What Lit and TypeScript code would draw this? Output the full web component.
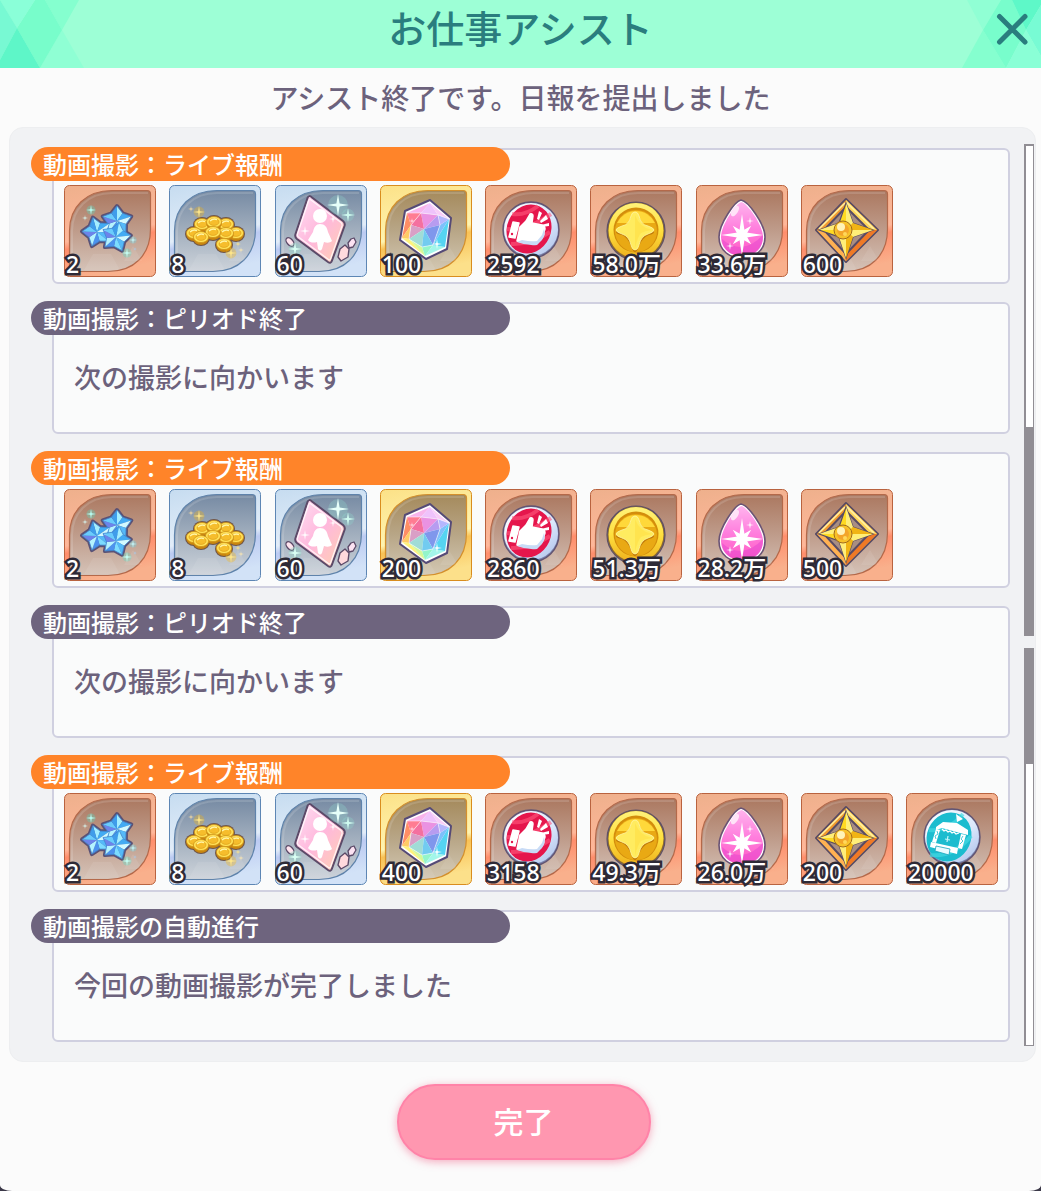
import { LitElement, html, css, svg, type TemplateResult, type SVGTemplateResult } from "lit";
import { customElement, property } from "lit/decorators.js";

type Tone = "bronze" | "silver" | "gold";
type Kind =
  | "stars" | "coins" | "card" | "prism" | "like"
  | "gold" | "drop" | "diamond" | "stage";

interface Reward { kind: Kind; count: string; }
interface Entry { title: string; rewards?: Reward[]; message?: string; }

const KINDS: Kind[] = ["stars", "coins", "card", "prism", "like", "gold", "drop", "diamond", "stage"];
const rewards = (...counts: string[]): Reward[] =>
  counts.map((count, i) => ({ kind: KINDS[i], count }));

const ENTRIES: Entry[] = [
  { title: "動画撮影：ライブ報酬", rewards: rewards("2", "8", "60", "100", "2592", "58.0万", "33.6万", "600") },
  { title: "動画撮影：ピリオド終了", message: "次の撮影に向かいます" },
  { title: "動画撮影：ライブ報酬", rewards: rewards("2", "8", "60", "200", "2860", "51.3万", "28.2万", "500") },
  { title: "動画撮影：ピリオド終了", message: "次の撮影に向かいます" },
  { title: "動画撮影：ライブ報酬", rewards: rewards("2", "8", "60", "400", "3158", "49.3万", "26.0万", "200", "20000") },
  { title: "動画撮影の自動進行", message: "今回の動画撮影が完了しました" },
];

const TONES: Record<Kind, Tone> = {
  stars: "bronze", coins: "silver", card: "silver", prism: "gold", like: "bronze",
  gold: "bronze", drop: "bronze", diamond: "bronze", stage: "bronze",
};

const PALETTE: Record<Tone, { edge: string; line: string; outer: string[]; inner: string[] }> = {
  bronze: { edge: "#b9633f", line: "#b4694a", outer: ["#eeb08c", "#ffb799", "#ff8e6c", "#f9b08c"], inner: ["#ab7860", "#bf9c8b", "#d5c3b8"] },
  silver: { edge: "#5d86b4", line: "#5f83ab", outer: ["#c6dcf0", "#e2edf9", "#bccbf2", "#d2e2f7"], inner: ["#768aa3", "#a2afbe", "#cdd3da"] },
  gold: { edge: "#d98d1e", line: "#d4902c", outer: ["#fce187", "#fff4b0", "#f9c256", "#fce08a"], inner: ["#a58a5c", "#b8a687", "#d3c8b3"] },
};

const ngon = (cx: number, cy: number, n: number, R: number, r: number, turn: number) =>
  Array.from({ length: n * 2 }, (_, i) => {
    const a = ((turn + (i * 180) / n) * Math.PI) / 180;
    const d = i % 2 ? r : R;
    return [cx + d * Math.sin(a), cy - d * Math.cos(a)] as const;
  });

const pts = (p: ReadonlyArray<readonly [number, number]>) =>
  p.map(([x, y]) => `${x.toFixed(1)},${y.toFixed(1)}`).join(" ");

const sparkle = (x: number, y: number, r: number, fill = "#fff", glow = "") => svg`
  ${glow ? svg`<circle cx=${x} cy=${y} r=${r * 0.9} fill=${glow} opacity="0.3"></circle>` : ""}
  <polygon points=${pts(ngon(x, y, 4, r, r * 0.2, 0))} fill=${fill}></polygon>`;

const blueStar = (x: number, y: number, turn: number) => {
  const p = ngon(x, y, 5, 15, 9.5, turn);
  const shades = ["#a4eeff", "#43abf3", "#d2f9ff", "#55b9f8", "#7cdcff", "#4c92ee", "#b4f3ff", "#6d83ea", "#6accfc", "#3f9dea"];
  return svg`${p.map((a, i) => svg`<polygon points=${pts([[x, y], a, p[(i + 1) % 10]])} fill=${shades[i]}></polygon>`)}
    <polygon points=${pts(p)} fill="none" stroke="#3f86cf" stroke-width="0.8" stroke-linejoin="round"></polygon>`;
};

const STARS: [number, number, number][] = [[53, 36, 0], [33, 47, -16], [52, 52, 12]];
const COINS: [number, number][] = [[33, 39], [57, 39], [45, 37], [25, 48], [67, 48], [57, 48], [44, 47], [32, 52], [55, 59]];

const ART: Record<Kind, () => SVGTemplateResult> = {
  stars: () => svg`
    ${STARS.map(([x, y, t]) => svg`<polygon points=${pts(ngon(x, y, 5, 15, 9.5, t))} fill="#3f6fb8" stroke="#5b5275" stroke-width="4" stroke-linejoin="round"></polygon>`)}
    ${STARS.map(([x, y, t]) => blueStar(x, y, t))}
    ${sparkle(27, 25, 5, "#b9fff4", "#4fe0c8")}${sparkle(21, 33, 3, "#d9fffa")}
    ${sparkle(69, 55, 4, "#c6fbff", "#5fd6f0")}${sparkle(63, 68, 5, "#c6fff6", "#4fe0c8")}${sparkle(71, 64, 2, "#9fd2ff")}`,
  coins: () => svg`
    ${COINS.map(([x, y]) => svg`<ellipse cx=${x} cy=${y + 1} rx="9" ry="8" fill="#6f5548"></ellipse>`)}
    ${COINS.map(([x, y]) => svg`
      <ellipse cx=${x} cy=${y + 2} rx="7.6" ry="6" fill="#c9860f"></ellipse>
      <ellipse cx=${x} cy=${y} rx="7.6" ry="5.6" fill="#ffdf55" stroke="#cf9418" stroke-width="0.8"></ellipse>
      <ellipse cx=${x} cy=${y} rx="5" ry="3.4" fill="#f6bd2c" stroke="#d99b16" stroke-width="0.6"></ellipse>
      <path d="M${x - 4} ${y - 1}q3 -3 7 -1.4" stroke="#fff5a4" stroke-width="1.4" fill="none"></path>`)}
    ${sparkle(30, 27, 6, "#ffe78a", "#ffb700")}${sparkle(22, 24, 3, "#ffe0a0")}
    ${sparkle(62, 68, 6, "#ffe78a", "#ffb700")}${sparkle(69, 59, 3, "#ffe78a")}${sparkle(72, 65, 3, "#ffe9b0")}`,
  card: () => svg`
    <path d="M37 12.500Q34 9.500 32.500 13L20.500 49Q19.500 52 22 54L53 77Q56 79 57 75.500L69.500 41Q70.500 38 68 36Z" fill="url(#pink)" stroke="#5c4a68" stroke-width="2"></path>
    <path d="M36 15Q34.500 13.500 33.500 16L22.500 49Q22 51 23.500 52L53.500 74.500Q55 75.500 55.500 74L67 41Q67.500 39 66 37.500Z" fill="none" stroke="#fff" stroke-width="1.2" opacity="0.8"></path>
    <circle cx="45" cy="31" r="7" fill="#fff"></circle>
    <path d="M45 39c5 0 7 3 8 8l4 9c-2 2-5 2-8 1l-2 7q-2 3-4 0l-1-7c-3 1-7 1-9-2l5-8c1-5 3-8 7-8Z" fill="#fff"></path>
    <ellipse cx="15" cy="57" rx="3" ry="5" transform="rotate(-42 15 57)" fill="#ffe4ee" stroke="#5c4a68" stroke-width="1.3"></ellipse>
    <path d="M70 60l4 4-1 8-7 4-3-4 2-8Z" fill="#ffd9dd" stroke="#5c4a68" stroke-width="1.4" stroke-linejoin="round"></path>
    <path d="M79 53l2 4-3 5-4 1-1-5 3-4Z" fill="#fbe2f2" stroke="#5c4a68" stroke-width="1.3" stroke-linejoin="round"></path>
    ${sparkle(63, 20, 11, "#e6fff9", "#8fd6cc")}${sparkle(73, 30, 7, "#d0fbf0", "#8fd6cc")}
    ${sparkle(30, 46, 5)}${sparkle(58, 34, 4)}${sparkle(20, 64, 7, "#d9fff4", "#7fd6c0")}`,
  prism: () => svg`
    <path d="M50 15L71 33 67 64 46 74 20 55 25 26Z" fill="#fff" stroke="#554a77" stroke-width="2" stroke-linejoin="round"></path>
    <path d="M50 18L41 28 27 28Z" fill="#f8b4ec"></path><path d="M50 18L58 30 41 28Z" fill="#efc2fb"></path>
    <path d="M50 18L69 34 58 30Z" fill="#f9cdf7"></path><path d="M27 28L41 28 31 40Z" fill="#ff7c92"></path>
    <path d="M27 28L31 40 22 53Z" fill="#ff8e64"></path><path d="M31 40L29 54 22 53Z" fill="#ffcb66"></path>
    <path d="M22 53L29 54 45 71Z" fill="#fff27c"></path><path d="M29 54L42 62 45 71Z" fill="#d3f99a"></path>
    <path d="M42 62L53 60 45 71Z" fill="#93f5ca"></path><path d="M53 60L65 62 45 71Z" fill="#a3f6ea"></path>
    <path d="M69 34L65 62 53 60Z" fill="#55d4f2"></path><path d="M69 34L53 60 60 40Z" fill="#7dc0fb"></path>
    <path d="M58 30L69 34 60 40Z" fill="#b5b6fd"></path><path d="M41 28L58 30 44 44Z" fill="#ea92e2"></path>
    <path d="M58 30L60 40 44 44Z" fill="#b79cf0"></path><path d="M60 40L53 60 44 44Z" fill="#7f97ec"></path>
    <path d="M41 28L44 44 31 40Z" fill="#f4709f"></path><path d="M31 40L44 44 29 54Z" fill="#d99fc6"></path>
    <path d="M29 54L44 44 42 62Z" fill="#a0dcd6"></path><path d="M42 62L44 44 53 60Z" fill="#72cbf0"></path>
    <path d="M27 28H41L58 30 69 34M41 28L31 40 29 54 42 62 53 60 60 40 58 30" fill="none" stroke="#fff" stroke-width="0.8" opacity="0.65"></path>
    ${sparkle(57, 59, 5)}${sparkle(32, 36, 3, "#ffe5ef")}`,
  like: () => svg`
    <ellipse cx="46" cy="45" rx="28" ry="28" fill="#7882ab" stroke="#625472" stroke-width="1.4"></ellipse>
    <ellipse cx="46" cy="44.500" rx="27" ry="26.500" fill="url(#rim)"></ellipse>
    <ellipse cx="44" cy="44" rx="22" ry="25" transform="rotate(24 44 44)" fill="#e5164c"></ellipse>
    <path d="M27 29Q40 31 53 21M22 44Q42 46 66 29M26 59Q45 60 65 47" fill="none" stroke="#ff5a7e" stroke-width="4" opacity="0.6"></path>
    <path d="M28 37l6 1-4 15-6-1ZM35 42l6-6 4-7q3-1 3 2l-1 7 10 2q3 1 3 4l-1 3q0 3-1 4l-2 3-4 4q-10 1-20-2Z" fill="#fff" stroke="#fff" stroke-width="1.5" stroke-linejoin="round"></path>
    <path d="M37 55q9 2 15 1l5-6 2-6q2 6-2 11l-5 5q-10 1-20-3Z" fill="#c8dbf6"></path>
    <circle cx="27" cy="49" r="1.2" fill="#e5164c"></circle>
    <path d="M52 34l2-8 3 2-3 7ZM55 36l6-6 2 4-7 4ZM56 40l8-2v3l-7 1Z" fill="#fff"></path>`,
  gold: () => svg`
    <circle cx="46" cy="46" r="29" fill="#8b6930" stroke="#5d5068" stroke-width="1.2"></circle>
    <circle cx="46" cy="45.500" r="27.500" fill="url(#coin)"></circle>
    <circle cx="46" cy="45" r="22.500" fill="#d38d0c"></circle>
    <circle cx="46" cy="46" r="21" fill="#e9a914"></circle>
    <path d="M27 38a21 21 0 0 1 38 0Z" fill="#ffd83a"></path>
    <path d="M45 28q3 0 4 4 3 8 10 11 5 2 5 4t-5 3q-7 3-10 11-2 6-4 6t-4-6q-3-8-9-11-6-1-6-3t6-4q6-3 9-11 1-4 4-4Z" fill="#c17b08"></path>
    <path d="M45 27q3 0 4 4 2 9 9 10 6 2 6 4t-6 4q-7 2-9 11-1 5-4 5t-4-5q-2-9-9-11-6-2-6-4t6-4q7-1 9-10 1-4 4-4Z" fill="#ffec60" stroke="#fff6a2" stroke-width="0.8"></path>
    <path d="M45 30v33q3-12 6-15 4-2 11-3-12-2-17-15Z" fill="#ffdf45" opacity="0.6"></path>`,
  drop: () => svg`
    <path d="M45 15C52 16 69 39 69 52 69 66 58 73 46 73S23 66 23 52C23 39 39 16 45 15Z" fill="#fff" stroke="#6a5375" stroke-width="1.6"></path>
    <path d="M45.500 17C51 18 67 40 67 52 67 64 57 71 46 71S25 64 25 52C25 40 40 18 45.500 17Z" fill="url(#dropfill)"></path>
    <path d="M26 54Q46 72 67 50 67 71 46 71 27 70 26 54Z" fill="#e344cf" opacity="0.5"></path>
    <ellipse cx="39" cy="26" rx="3" ry="6" transform="rotate(32 39 26)" fill="#ffe3f8"></ellipse>
    <polygon points=${pts(ngon(46, 50, 4, 13, 4, 45))} fill="#fff"></polygon>
    <polygon points=${pts(ngon(46, 50, 4, 21, 4, 0))} fill="#fff"></polygon>
    ${sparkle(54, 36, 4)}${sparkle(34, 61, 4)}`,
  diamond: () => svg`
    <path d="M45 14L77 45 45 77 15 45ZM45 23L24 45 45 68 67 45Z" fill-rule="evenodd" fill="#584b64" stroke="#584b64" stroke-width="2" stroke-linejoin="round"></path>
    <path d="M45 18L24 45 45 72 67 45Z" fill="#a98e82"></path>
    <path d="M45 15L76 45 45 76 16 45ZM45 22L23 45 45 69 68 45Z" fill-rule="evenodd" fill="#f39b2f"></path>
    <path d="M45 15L76 45 68 45 45 22Z" fill="#ffd65a"></path>
    <path d="M45 17L73 44M18 44L44 18" stroke="#fff1a1" stroke-width="1.6"></path>
    <path d="M45 76L76 45 68 45 45 69Z" fill="#ef7926"></path><path d="M45 76L16 45 23 45 45 69Z" fill="#ffb153"></path>
    <path d="M45 22L23 45 45 69 68 45Z" fill="none" stroke="#584b64" stroke-width="2"></path>
    <path d="M45 18L52 38 72 45 52 52 45 73 38 52 18 45 38 38Z" fill="#ffda22" stroke="#584b64" stroke-width="1.2"></path>
    <path d="M45 18L52 38 45 45ZM72 45L52 52 45 45ZM45 73L38 52 45 45ZM18 45L38 38 45 45Z" fill="#ffee78"></path>
    <path d="M45 73L52 52 45 45ZM72 45L52 38 45 45Z" fill="#f1b414"></path>
    <circle cx="42" cy="45" r="9" fill="#f7c22a" stroke="#a06a1c" stroke-width="1"></circle>
    <circle cx="42" cy="45" r="6" fill="#f3a52a"></circle><circle cx="40" cy="42" r="4" fill="#fff3b8"></circle>
    <circle cx="44" cy="49" r="2" fill="#ffd95a"></circle>`,
  stage: () => svg`
    <ellipse cx="46" cy="44" rx="28" ry="28" fill="#7882ab" stroke="#625472" stroke-width="1.4"></ellipse>
    <ellipse cx="46" cy="43.500" rx="27" ry="26.500" fill="url(#rim)"></ellipse>
    <ellipse cx="43" cy="44" rx="22" ry="25" transform="rotate(24 43 44)" fill="#1cbccf"></ellipse>
    <path d="M23 37Q42 39 57 21M24 62Q47 65 65 43" fill="none" stroke="#43d8e2" stroke-width="4" opacity="0.7"></path>
    <path d="M30 34L37 29 51 30 62 37 62 42 54 40 36 35 30 37Z" fill="#fff"></path>
    <path d="M50 21l7 5-6 3Z" fill="#fff"></path>
    <path d="M30 36l4 1-4 13-4-1ZM55 41l5 1-4 14-4-1Z" fill="#fff"></path>
    <path d="M25 49L52 55 51 61 24 54Z" fill="#fff"></path>
    <path d="M31 38l1 3-3 2 1 3M57 43l-2 3 2 2-3 3" fill="none" stroke="#1cbccf" stroke-width="0.8"></path>
    <path d="M36 36l2 2 2-1 2 2 2-1 2 2 2-1 2 2 3-1" fill="none" stroke="#fff" stroke-width="1.200"></path>
    <path d="M30 53l14 3-1 6-14-4Z" fill="#e9fbff" stroke="#18a5bd" stroke-width="0.8"></path>
    <path d="M42 43l-1 6m-2-3l5 1" stroke="#c9f6fb" stroke-width="1.2"></path>`,
};

@customElement("reward-tile")
export class RewardTile extends LitElement {
  @property() kind: Kind = "stars";
  @property() count = "";

  static styles = css`
    :host { display: block; position: relative; }
    .art { display: block; width: 100%; height: auto; }
    .count {
      position: absolute;
      left: 2px;
      bottom: 0;
      font: 500 23px/26px "Noto Sans", "Noto Sans CJK JP", sans-serif;
      color: #fff;
      -webkit-text-stroke: 5px #2e2a36;
      paint-order: stroke fill;
      white-space: nowrap;
    }
  `;

  render(): TemplateResult {
    const c = PALETTE[TONES[this.kind]];
    return html`
      <svg class="art" viewBox="0 0 92 92" aria-hidden="true">
        <defs>
          <linearGradient id="outer" x1="0" y1="0" x2="0.2" y2="1">
            <stop offset="0" stop-color=${c.outer[0]}></stop>
            <stop offset="0.6" stop-color=${c.outer[1]}></stop>
            <stop offset="0.68" stop-color=${c.outer[2]}></stop>
            <stop offset="1" stop-color=${c.outer[3]}></stop>
          </linearGradient>
          <linearGradient id="inner" x1="0" y1="0" x2="0" y2="1">
            <stop offset="0" stop-color=${c.inner[0]}></stop>
            <stop offset="0.5" stop-color=${c.inner[1]}></stop>
            <stop offset="1" stop-color=${c.inner[2]}></stop>
          </linearGradient>
          <linearGradient id="pink" x1="0" y1="0" x2="1" y2="1">
            <stop offset="0" stop-color="#ffe0f4"></stop><stop offset="0.5" stop-color="#ffb8dc"></stop><stop offset="1" stop-color="#ffd2ad"></stop>
          </linearGradient>
          <linearGradient id="rim" x1="0" y1="0" x2="1" y2="1">
            <stop offset="0" stop-color="#ffffff"></stop><stop offset="0.6" stop-color="#dbe8fb"></stop><stop offset="1" stop-color="#a9bce8"></stop>
          </linearGradient>
          <linearGradient id="coin" x1="0" y1="0" x2="0" y2="1">
            <stop offset="0" stop-color="#fff27a"></stop><stop offset="0.5" stop-color="#ffe03f"></stop><stop offset="1" stop-color="#eeb01c"></stop>
          </linearGradient>
          <linearGradient id="dropfill" x1="0" y1="0" x2="0" y2="1">
            <stop offset="0" stop-color="#ffb4ee"></stop><stop offset="0.5" stop-color="#ff7edd"></stop><stop offset="1" stop-color="#ff5cc4"></stop>
          </linearGradient>
        </defs>
        <rect x="0.5" y="0.5" width="91" height="91" rx="5" fill="url(#outer)" stroke=${c.edge}></rect>
        <path d="M5.500 86V46C5.500 22 22 5.500 48 5.500H83Q86.500 5.500 86.500 9V44C86.500 70 70 86.500 44 86.500H6Z" fill="url(#inner)" stroke=${c.line} stroke-width="1.2"></path>
        <path d="M8 84V46C8 24 24 8 48 8H84" fill="none" stroke="#fff" stroke-width="2" opacity="0.14"></path>
        <path d="M20 85l9-16 9 16ZM38 85l9-16 9 16ZM29 69h18l-9 16ZM60 76l9-15 9 15Z" fill="#fff" opacity="0.08"></path>
        ${ART[this.kind]()}
      </svg>
      <span class="count">${this.count}</span>
    `;
  }
}

@customElement("app-root")
export class AppRoot extends LitElement {
  static styles = css`
    * { box-sizing: border-box; }
    :host {
      display: block;
      background: #3b3848;
      color: #6c627c;
      font-family: "Noto Sans CJK JP", sans-serif;
      font-weight: 500;
    }
    .dialog {
      display: flex;
      flex-direction: column;
      min-height: 100vh;
      background: #fbfbfb;
      border-radius: 0 0 12px 12px / 0 0 6px 6px;
    }
    .header {
      display: grid;
      grid-template-columns: 100px 1fr 100px;
      height: 68px;
      background: #9dffd6;
      overflow: hidden;
    }
    .facets, .title, .close { grid-row: 1; }
    .facets { display: block; width: 100px; height: 68px; }
    .facets.left { grid-column: 1; }
    .facets.right { grid-column: 3; }
    .title {
      grid-column: 2;
      margin: 0;
      text-align: center;
      font-size: 38px;
      font-weight: 500;
      line-height: 54px;
      color: #2a7d7e;
    }
    .close {
      grid-column: 3;
      justify-self: end;
      width: 58px;
      height: 58px;
      padding: 0;
      border: 0;
      background: none;
      cursor: pointer;
    }
    .close svg { display: block; width: 58px; height: 58px; }
    .summary {
      margin: 0;
      padding: 10px 16px;
      text-align: center;
      font-size: 28px;
      line-height: 39px;
    }
    .panel {
      display: grid;
      grid-template-columns: minmax(0, 1fr) 10px;
      column-gap: 14px;
      margin: 0 5px 0 9px;
      padding: 16px 1px 15px 42px;
      background: #f1f2f4;
      border: 1px solid #edeef0;
      border-radius: 14px;
    }
    .log {
      display: flex;
      flex-direction: column;
      gap: 18px;
      margin: 0;
      padding: 4px 0;
      list-style: none;
    }
    .entry {
      min-height: 132px;
      background: #fafbfb;
      border: 2px solid #d0d0e0;
      border-radius: 6px;
    }
    .label {
      width: calc(50% + 2px);
      height: 34px;
      margin: -3px 0 0 -23px;
      padding: 0 12px;
      border-radius: 17px;
      background: #6e647e;
      color: #fff;
      font-size: 24px;
      font-weight: 500;
      line-height: 34px;
      white-space: nowrap;
    }
    .label.live { background: #ff8429; }
    .rewards {
      display: grid;
      grid-template-columns: repeat(9, minmax(0, 92px));
      justify-content: space-between;
      margin: 0;
      padding: 4px 10px 5px;
      list-style: none;
    }
    .message {
      margin: 0;
      padding: 22px 20px;
      font-size: 27px;
      line-height: 40px;
    }
    .rail { display: flex; flex-direction: column; gap: 12px; }
    .track {
      display: flex;
      flex-direction: column;
      background: #fff;
      border: 2px solid #918e94;
      border-width: 2px 1px 1px 2px;
    }
    .track.upper { flex: 492 0 0; justify-content: flex-end; }
    .track.lower { flex: 398 0 0; }
    .thumb { background: #918e94; }
    .upper .thumb { height: 42.5%; }
    .lower .thumb { height: 29%; }
    .footer {
      display: flex;
      justify-content: center;
      padding: 22px 16px 31px 22px;
    }
    .done {
      width: 254px;
      height: 76px;
      padding: 0 0 4px;
      border: 2px solid #ff83a8;
      border-radius: 38px;
      background: #ff97b0;
      box-shadow: 0 2px 8px rgba(240, 90, 130, 0.5);
      color: #fff;
      font: inherit;
      font-size: 30px;
      cursor: pointer;
    }
  `;

  private entry(e: Entry): TemplateResult {
    return html`
      <li class="entry">
        <h2 class="label ${e.rewards ? "live" : ""}">${e.title}</h2>
        ${e.rewards
          ? html`<ul class="rewards">
              ${e.rewards.map((r) => html`<li><reward-tile .kind=${r.kind} .count=${r.count}></reward-tile></li>`)}
            </ul>`
          : html`<p class="message">${e.message}</p>`}
      </li>
    `;
  }

  render(): TemplateResult {
    return html`
      <main class="dialog" lang="ja">
        <header class="header">
          <svg class="facets left" viewBox="0 0 100 68" aria-hidden="true">
            <path d="M45 0H79L62 30Z" fill="#85ffcf"></path>
            <path d="M62 30L84 68H40Z" fill="#8fffd4"></path>
            <path d="M35 0H45L62 30 40 68 17 28Z" fill="#78fdcb"></path>
            <path d="M0 0H35L17 28Z" fill="#8affd8"></path>
            <path d="M0 0L17 28 0 60Z" fill="#78f9d3"></path>
            <path d="M17 28L40 68H0V60Z" fill="#5ef6c8"></path>
          </svg>
          <h1 class="title">お仕事アシスト</h1>
          <svg class="facets right" viewBox="0 0 100 68" aria-hidden="true">
            <path d="M26 0H60L42 30Z" fill="#90ffd4"></path>
            <path d="M42 30L65 68H21Z" fill="#85ffcf"></path>
            <path d="M60 0H71L85 30 65 68 42 30Z" fill="#78fdcc"></path>
            <path d="M71 0H100V5L85 30Z" fill="#5ef8c8"></path>
            <path d="M85 30L100 5V56Z" fill="#78fbd4"></path>
            <path d="M85 30L100 56V68H65Z" fill="#8affd6"></path>
          </svg>
          <button class="close" type="button" aria-label="閉じる">
            <svg viewBox="0 0 58 58" aria-hidden="true">
              <path d="M16.500 16.500L42 42M42 16.500L16.500 42" stroke="#2a7d7e" stroke-width="5" stroke-linecap="round"></path>
            </svg>
          </button>
        </header>
        <p class="summary">アシスト終了です。日報を提出しました</p>
        <section class="panel">
          <ul class="log">${ENTRIES.map((e) => this.entry(e))}</ul>
          <div class="rail" aria-hidden="true">
            <div class="track upper"><div class="thumb"></div></div>
            <div class="track lower"><div class="thumb"></div></div>
          </div>
        </section>
        <footer class="footer"><button class="done" type="button">完了</button></footer>
      </main>
    `;
  }
}
